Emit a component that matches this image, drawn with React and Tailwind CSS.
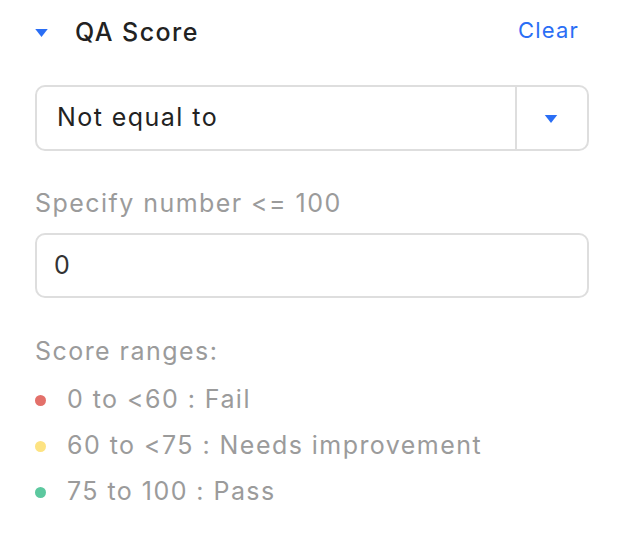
import React from 'react';

const ranges = [
  { label: '0 to <60 : Fail', dot: 'bg-[#e3706a]' },
  { label: '60 to <75 : Needs improvement', dot: 'bg-[#fde382]' },
  { label: '75 to 100 : Pass', dot: 'bg-[#5cc89f]' },
];

function Caret({ className }) {
  return (
    <svg viewBox="0 0 14 9" className={className} fill="currentColor">
      <path d="M0 0h14L7 9z" />
    </svg>
  );
}

export default function App() {
  return (
    <div className="min-h-[554px] bg-white pl-[35px] pr-[39px] font-['Inter','Liberation_Sans',sans-serif] tracking-[1.45px]">
      <div className="flex h-[66px] items-center justify-between">
        <div className="flex items-center">
          <Caret className="h-[8px] w-[13px] text-[#2a6ef5]" />
          <span className="ml-[27px] text-[25px] font-medium text-[#222]">QA Score</span>
        </div>
        <button type="button" className="mb-[6px] mr-[10px] text-[22px] tracking-[1.2px] text-[#2a6ef5]">
          Clear
        </button>
      </div>

      <div className="mt-[19px] flex h-[66px] items-stretch rounded-[10px] border-2 border-[#dedede]">
        <div className="flex flex-1 items-center pl-[20px] text-[25px] text-[#222]">Not equal to</div>
        <div className="flex w-[72px] items-center justify-center border-l-2 border-[#dedede]">
          <Caret className="ml-[-2px] mt-[2px] h-[8px] w-[14px] text-[#2a6ef5]" />
        </div>
      </div>

      <div className="mt-[36px] text-[25px] leading-[32px] text-[#9b9b9b]">Specify number &lt;= 100</div>

      <div className="mt-[14px] flex h-[65px] items-center rounded-[10px] border-2 border-[#dedede] pl-[17px] text-[25px] text-[#333]">
        0
      </div>

      <div className="mt-[37px] text-[25px] leading-[32px] text-[#9b9b9b]">Score ranges:</div>

      <ul className="mt-[10px]">
        {ranges.map((r) => (
          <li key={r.label} className="flex h-[46px] items-center text-[25px] text-[#9b9b9b]">
            <span className={`h-[11px] w-[11px] shrink-0 rounded-full ${r.dot}`} />
            <span className="ml-[21px]">{r.label}</span>
          </li>
        ))}
      </ul>
    </div>
  );
}
